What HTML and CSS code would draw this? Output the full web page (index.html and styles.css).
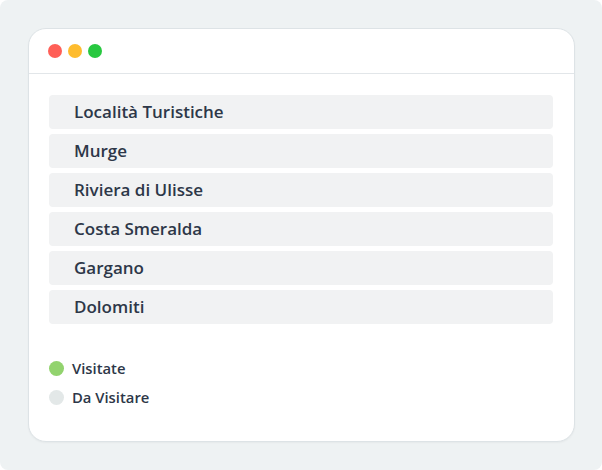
FILE: index.html
```html
<!DOCTYPE html>
<html lang="it">
<head>
<meta charset="utf-8">
<link rel="stylesheet" href="styles.css">
</head>
<body>
<div class="page">
  <div class="card">
    <div class="titlebar">
      <span class="dot red"></span>
      <span class="dot yellow"></span>
      <span class="dot green"></span>
    </div>
    <div class="content">
      <ul class="list">
        <li class="row">Località Turistiche</li>
        <li class="row">Murge</li>
        <li class="row">Riviera di Ulisse</li>
        <li class="row">Costa Smeralda</li>
        <li class="row">Gargano</li>
        <li class="row">Dolomiti</li>
      </ul>
      <div class="legend">
        <div class="legend-item"><span class="ldot visited"></span>Visitate</div>
        <div class="legend-item"><span class="ldot todo"></span>Da Visitare</div>
      </div>
    </div>
  </div>
</div>
</body>
</html>
```
FILE: styles.css
```css
* { box-sizing: border-box; }
html, body { margin: 0; padding: 0; background: #ffffff; }
body { font-family: "Open Sans", "Noto Sans", sans-serif; color: #2d3748; }
.page {
  width: 602px;
  height: 470px;
  background: #eef2f3;
  border-radius: 8px;
  padding: 28px 27px 0 28px;
}
.card {
  width: 547px;
  height: 414px;
  background: #ffffff;
  border: 1px solid #dde3e6;
  border-radius: 18px;
  box-shadow: 0 1px 2px rgba(0,0,0,0.04);
  overflow: hidden;
}
.titlebar {
  height: 45px;
  border-bottom: 1px solid #e2e6e9;
  display: flex;
  align-items: center;
  gap: 6px;
  padding: 0 19px;
}
.dot { width: 14px; height: 14px; border-radius: 50%; display: block; }
.red { background: #ff5f57; }
.yellow { background: #febc2e; }
.green { background: #28c840; }
.content { padding: 21px 21px 0 20px; }
.list { list-style: none; margin: 0; padding: 0; display: flex; flex-direction: column; gap: 5.5px; }
.row {
  height: 33.5px;
  background: #f1f2f3;
  border-radius: 4px;
  padding-left: 25px;
  display: flex;
  align-items: center;
  font-size: 17px;
  font-weight: 600;
  color: #2d3748;
}
.legend { margin-top: 37px; display: flex; flex-direction: column; gap: 14px; }
.legend-item {
  display: flex;
  align-items: center;
  gap: 8px;
  font-size: 14.8px;
  font-weight: 600;
  color: #2d3748;
  height: 15px;
}
.ldot { width: 15px; height: 15px; border-radius: 50%; display: block; }
.visited { background: #92d36e; }
.todo { background: #e3e8e8; }
```
